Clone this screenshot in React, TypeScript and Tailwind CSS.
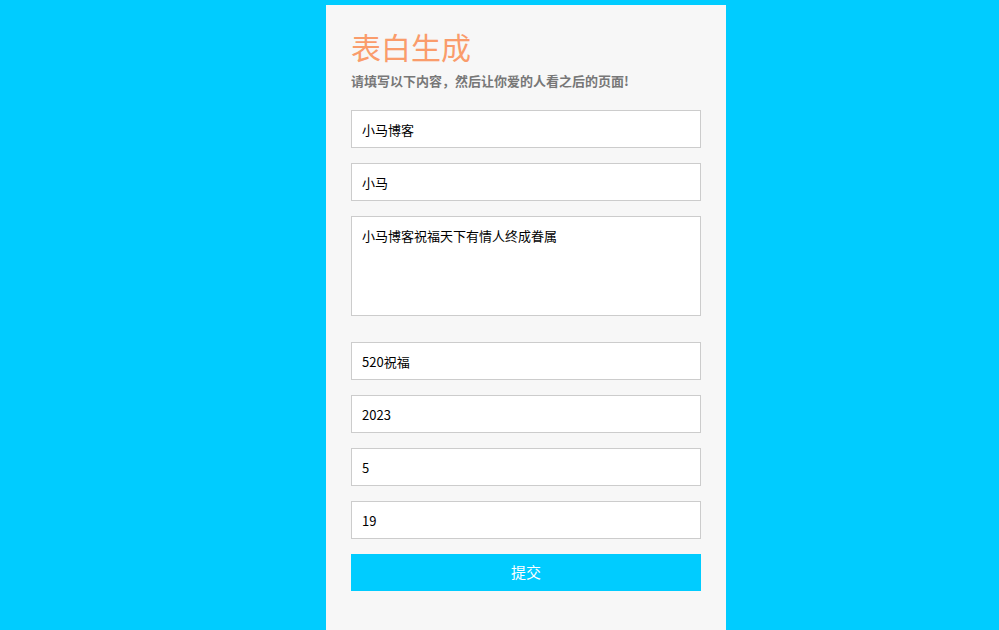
import React from "react";

export default function App() {
  const font = { fontFamily: '"Noto Sans CJK SC", "Liberation Sans", sans-serif' };
  const inputCls =
    "block w-full h-[38px] border border-[#cccccc] bg-white px-[10px] text-[13px] text-black outline-none";
  return (
    <div className="h-[630px] w-full overflow-hidden bg-[#00ccff]" style={font}>
      <div className="ml-[326px] mt-[5px] min-h-[640px] w-[400px] bg-[#f7f7f7] px-[25px] pt-[21px]">
        <h1 className="text-[30px] leading-[40px] font-normal text-[#fa9c6b]">表白生成</h1>
        <p className="mt-[5px] text-[13px] leading-[20px] font-bold text-[#777777]">
          请填写以下内容，然后让你爱的人看之后的页面!
        </p>
        <div className="mt-[19px] flex flex-col">
          <input className={inputCls} defaultValue="小马博客" />
          <input className={inputCls + " mt-[15px]"} defaultValue="小马" />
          <textarea
            className="mt-[15px] block h-[100px] w-full resize-none border border-[#cccccc] bg-white px-[10px] py-[10px] text-[13px] leading-[18px] text-black outline-none"
            defaultValue="小马博客祝福天下有情人终成眷属"
          />
          <input className={inputCls + " mt-[26px]"} defaultValue="520祝福" />
          <input className={inputCls + " mt-[15px]"} defaultValue="2023" />
          <input className={inputCls + " mt-[15px]"} defaultValue="5" />
          <input className={inputCls + " mt-[15px]"} defaultValue="19" />
          <button className="mt-[15px] h-[37px] w-full bg-[#00ccff] text-[15px] text-white">
            提交
          </button>
        </div>
      </div>
    </div>
  );
}
